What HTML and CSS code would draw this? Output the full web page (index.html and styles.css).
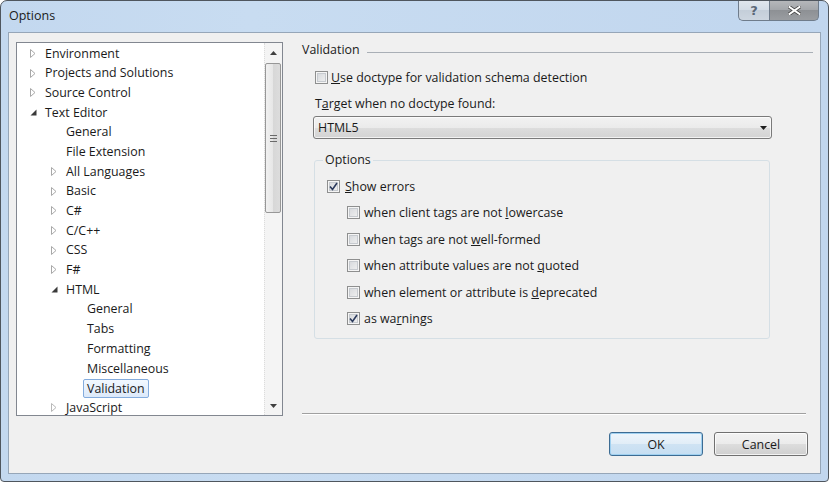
FILE: index.html
```html
<!DOCTYPE html>
<html>
<head>
<meta charset="utf-8">
<title>Options</title>
<link rel="stylesheet" href="styles.css">
</head>
<body>
<div class="window">
  <div class="titlebar">
    <span class="title">Options</span>
    <div class="caption">
      <span class="cap-btn help">?</span>
      <span class="cap-btn close"><svg width="13" height="9" viewBox="0 0 13 9"><path d="M1.5 1 L11.5 8 M11.5 1 L1.5 8" stroke="#4a4a4a" stroke-width="3.6" stroke-linecap="square"/><path d="M1.5 1 L11.5 8 M11.5 1 L1.5 8" stroke="#fff" stroke-width="2" stroke-linecap="square"/></svg></span>
    </div>
  </div>
  <div class="client">
    <div class="main">
      <div class="tree">
        <ul class="tree-list">
          <li class="row l0"><span class="exp"><svg width="6" height="9" viewBox="0 0 6 9"><path d="M0.5 0.5 L5 4.5 L0.5 8.5 Z" fill="#fff" stroke="#a8a8a8"/></svg></span>Environment</li>
          <li class="row l0"><span class="exp"><svg width="6" height="9" viewBox="0 0 6 9"><path d="M0.5 0.5 L5 4.5 L0.5 8.5 Z" fill="#fff" stroke="#a8a8a8"/></svg></span>Projects and Solutions</li>
          <li class="row l0"><span class="exp"><svg width="6" height="9" viewBox="0 0 6 9"><path d="M0.5 0.5 L5 4.5 L0.5 8.5 Z" fill="#fff" stroke="#a8a8a8"/></svg></span>Source Control</li>
          <li class="row l0"><span class="exp"><svg width="7" height="7" viewBox="0 0 7 7"><path d="M6.5 0.5 V6.5 H0.5 Z" fill="#3a3a3a"/></svg></span>Text Editor</li>
          <li class="row l1"><span class="exp"></span>General</li>
          <li class="row l1"><span class="exp"></span>File Extension</li>
          <li class="row l1"><span class="exp"><svg width="6" height="9" viewBox="0 0 6 9"><path d="M0.5 0.5 L5 4.5 L0.5 8.5 Z" fill="#fff" stroke="#a8a8a8"/></svg></span>All Languages</li>
          <li class="row l1"><span class="exp"><svg width="6" height="9" viewBox="0 0 6 9"><path d="M0.5 0.5 L5 4.5 L0.5 8.5 Z" fill="#fff" stroke="#a8a8a8"/></svg></span>Basic</li>
          <li class="row l1"><span class="exp"><svg width="6" height="9" viewBox="0 0 6 9"><path d="M0.5 0.5 L5 4.5 L0.5 8.5 Z" fill="#fff" stroke="#a8a8a8"/></svg></span>C#</li>
          <li class="row l1"><span class="exp"><svg width="6" height="9" viewBox="0 0 6 9"><path d="M0.5 0.5 L5 4.5 L0.5 8.5 Z" fill="#fff" stroke="#a8a8a8"/></svg></span>C/C++</li>
          <li class="row l1"><span class="exp"><svg width="6" height="9" viewBox="0 0 6 9"><path d="M0.5 0.5 L5 4.5 L0.5 8.5 Z" fill="#fff" stroke="#a8a8a8"/></svg></span>CSS</li>
          <li class="row l1"><span class="exp"><svg width="6" height="9" viewBox="0 0 6 9"><path d="M0.5 0.5 L5 4.5 L0.5 8.5 Z" fill="#fff" stroke="#a8a8a8"/></svg></span>F#</li>
          <li class="row l1"><span class="exp"><svg width="7" height="7" viewBox="0 0 7 7"><path d="M6.5 0.5 V6.5 H0.5 Z" fill="#3a3a3a"/></svg></span>HTML</li>
          <li class="row l2"><span class="exp"></span>General</li>
          <li class="row l2"><span class="exp"></span>Tabs</li>
          <li class="row l2"><span class="exp"></span>Formatting</li>
          <li class="row l2"><span class="exp"></span>Miscellaneous</li>
          <li class="row l2"><span class="exp"></span><span class="selected">Validation</span></li>
          <li class="row l1"><span class="exp"><svg width="6" height="9" viewBox="0 0 6 9"><path d="M0.5 0.5 L5 4.5 L0.5 8.5 Z" fill="#fff" stroke="#b8b8b8"/></svg></span>JavaScript</li>
        </ul>
        <div class="vscroll">
          <span class="sb-arrow"><svg width="7" height="4" viewBox="0 0 7 4"><path d="M0 4 L3.5 0 L7 4 Z" fill="#404040"/></svg></span>
          <div class="sb-track">
            <div class="thumb"><svg width="7" height="7" viewBox="0 0 7 7"><path d="M0 0.5 H7 M0 3.5 H7 M0 6.5 H7" stroke="#6a6a6a"/></svg></div>
          </div>
          <span class="sb-arrow"><svg width="7" height="4" viewBox="0 0 7 4"><path d="M0 0 L7 0 L3.5 4 Z" fill="#404040"/></svg></span>
        </div>
      </div>
      <div class="page">
        <div class="section-head"><span>Validation</span><span class="rule"></span></div>
        <div class="check top-check"><span class="cb"></span><span><u>U</u>se doctype for validation schema detection</span></div>
        <div class="field-label">T<u>a</u>rget when no doctype found:</div>
        <div class="select"><span>HTML5</span><svg width="7" height="4" viewBox="0 0 7 4"><path d="M0 0 L7 0 L3.5 4 Z" fill="#1e1e1e"/></svg></div>
        <fieldset class="group">
          <legend>Options</legend>
          <div class="group-body">
            <div class="check"><span class="cb checked"><svg width="9" height="9" viewBox="0 0 9 9"><path d="M1 4.5 L3.5 7.5 L8 1" fill="none" stroke="#2b3a5c" stroke-width="1.6"/></svg></span><span><u>S</u>how errors</span></div>
            <div class="check sub"><span class="cb"></span><span>when client tags are not <u>l</u>owercase</span></div>
            <div class="check sub"><span class="cb"></span><span>when tags are not <u>w</u>ell-formed</span></div>
            <div class="check sub"><span class="cb"></span><span>when attribute values are not <u>q</u>uoted</span></div>
            <div class="check sub"><span class="cb"></span><span>when element or attribute is <u>d</u>eprecated</span></div>
            <div class="check sub"><span class="cb checked"><svg width="9" height="9" viewBox="0 0 9 9"><path d="M1 4.5 L3.5 7.5 L8 1" fill="none" stroke="#2b3a5c" stroke-width="1.6"/></svg></span><span>as wa<u>r</u>nings</span></div>
          </div>
        </fieldset>
        <div class="separator"></div>
      </div>
    </div>
    <div class="buttons">
      <button class="btn default">OK</button>
      <button class="btn">Cancel</button>
    </div>
  </div>
</div>
</body>
</html>
```
FILE: styles.css
```css
html, body {
  margin: 0;
  padding: 0;
  background: #ffffff;
}
body {
  font-family: "Open Sans", "Noto Sans", "Liberation Sans", sans-serif;
  font-size: 12.4px;
  color: #1a1a1a;
}
.window {
  width: 829px;
  height: 482px;
  box-sizing: border-box;
  border: 1px solid #4f565e;
  border-radius: 7px 7px 4px 4px;
  background: linear-gradient(90deg, #c3d8ef 0%, #c8dcf1 30%, #c1d6ee 100%);
  display: flex;
  flex-direction: column;
  overflow: hidden;
}
.titlebar {
  height: 31px;
  flex: none;
  display: flex;
  align-items: flex-start;
}
.title {
  padding: 7px 0 0 8px;
  line-height: 16px;
  font-size: 12.5px;
  color: #1b1b1b;
}
.caption {
  margin-left: auto;
  margin-right: 9px;
  margin-top: -1px;
  display: flex;
}
.cap-btn {
  height: 21px;
  box-sizing: border-box;
  border: 1px solid #6f7c8b;
  border-top: none;
  display: flex;
  align-items: center;
  justify-content: center;
}
.help {
  width: 31px;
  border-right: none;
  border-radius: 0 0 0 5px;
  background: linear-gradient(#e1e7ee, #d3dce6 50%, #c4ced9 51%, #cdd6e0);
  color: #5b6777;
  font-family: "DejaVu Sans", sans-serif;
  font-weight: bold;
  font-size: 13px;
  line-height: 1;
}
.close {
  width: 50px;
  border-radius: 0 0 5px 0;
  background: linear-gradient(#b7b9bc, #a3a6aa 50%, #8d9094 51%, #9a9da1);
}
.client {
  flex: 1;
  margin: 0 7px 7px;
  border: 1px solid #96a6b8;
  background: #f0f0f0;
  display: flex;
  flex-direction: column;
  padding: 9px 7px 0 7px;
}
.main {
  height: 374px;
  flex: none;
  display: flex;
  gap: 19px;
}
.tree {
  width: 267px;
  flex: none;
  box-sizing: border-box;
  border: 1px solid #828790;
  background: #ffffff;
  display: flex;
  overflow: hidden;
}
.tree-list {
  flex: 1;
  list-style: none;
  margin: 0;
  padding: 0.5px 0 0;
  overflow: hidden;
}
.row {
  height: 19.7px;
  line-height: 19.7px;
  display: flex;
  align-items: center;
  white-space: nowrap;
  color: #1a1a1a;
}
.l0 { padding-left: 10px; }
.l1 { padding-left: 31px; }
.l2 { padding-left: 52px; }
.exp {
  width: 12px;
  height: 12px;
  margin-right: 6px;
  flex: none;
  display: flex;
  align-items: center;
  justify-content: center;
}
.selected {
  margin-left: -4px;
  padding: 0 3px;
  height: 17px;
  line-height: 17px;
  border: 1px solid #84acdd;
  border-radius: 2px;
  background: linear-gradient(#f2f8ff, #dce9fa);
}
.vscroll {
  width: 18px;
  flex: none;
  display: flex;
  flex-direction: column;
  background: #f4f4f4;
  border-left: 1px dotted #dcdcdc;
  box-sizing: border-box;
}
.sb-arrow {
  height: 19px;
  flex: none;
  display: flex;
  align-items: center;
  justify-content: center;
}
.sb-track {
  flex: 1;
  padding: 1px 1px 0 0;
}
.thumb {
  height: 150px;
  box-sizing: border-box;
  border: 1px solid #979797;
  border-radius: 2px;
  background: linear-gradient(90deg, #f1f1f1, #e6e6e6 50%, #d7d7d7 51%, #dcdcdc);
  display: flex;
  align-items: center;
  justify-content: center;
}
.page {
  flex: 1;
  display: flex;
  flex-direction: column;
}
.section-head {
  height: 16px;
  line-height: 16px;
  display: flex;
  align-items: center;
}
.rule {
  flex: 1;
  height: 1px;
  margin: 5px 0 0 7px;
  background: #a9afb6;
}
.check {
  height: 16px;
  display: flex;
  align-items: center;
  gap: 5px;
  white-space: nowrap;
}
.top-check {
  margin: 11px 0 0 13px;
  gap: 3px;
}
.cb {
  width: 13px;
  height: 13px;
  flex: none;
  box-sizing: border-box;
  border: 1px solid #8e8f8f;
  background: linear-gradient(135deg, #d2d5d9, #f3f3f3);
  box-shadow: inset 0 0 0 1px #f5f5f5, inset 0 0 0 2px #c6cacf;
  display: flex;
  align-items: center;
  justify-content: center;
}
.field-label {
  margin: 11px 0 0 13px;
  height: 16px;
  line-height: 16px;
}
.select {
  margin: 4px 0 0 11px;
  width: 459px;
  height: 23px;
  box-sizing: border-box;
  border: 1px solid #7a7a7a;
  border-radius: 3px;
  background: linear-gradient(#f2f2f2, #ebebeb 50%, #dddddd 51%, #d3d3d3);
  box-shadow: inset 0 0 0 1px rgba(255, 255, 255, 0.7);
  display: flex;
  align-items: center;
  justify-content: space-between;
  padding: 0 4px 0 4px;
}
.group {
  margin: 13px 0 0 12px;
  padding: 0;
  width: 456px;
  box-sizing: border-box;
  border: 1px solid #d5dfe5;
  border-radius: 3px;
}
.group legend {
  margin-left: 8px;
  padding: 0 2px;
  line-height: 16px;
}
.group-body {
  display: flex;
  flex-direction: column;
  gap: 10.6px;
  padding: 10px 8px 11px 12px;
}
.sub {
  margin-left: 20px;
  gap: 4px;
}
.separator {
  margin: auto 7px 1px 0;
  border-top: 1px solid #a0a0a0;
  border-bottom: 1px solid #ffffff;
  height: 0;
}
.buttons {
  display: flex;
  justify-content: flex-end;
  gap: 11px;
  margin-top: 16px;
  padding-right: 5px;
}
.btn {
  width: 94px;
  height: 24px;
  box-sizing: border-box;
  border: 1px solid #707070;
  border-radius: 3px;
  background: linear-gradient(#f2f2f2, #ebebeb 50%, #dddddd 51%, #cfcfcf);
  box-shadow: inset 0 0 0 1px rgba(255, 255, 255, 0.75);
  font-family: inherit;
  font-size: 12.4px;
  color: #1a1a1a;
  padding: 0;
}
.default {
  border-color: #3d6c93;
  background: linear-gradient(#eef5fb, #e1edf7 50%, #cfe3f3 51%, #c6def2);
  box-shadow: inset 0 0 0 1px #9fd0f0;
}
```
